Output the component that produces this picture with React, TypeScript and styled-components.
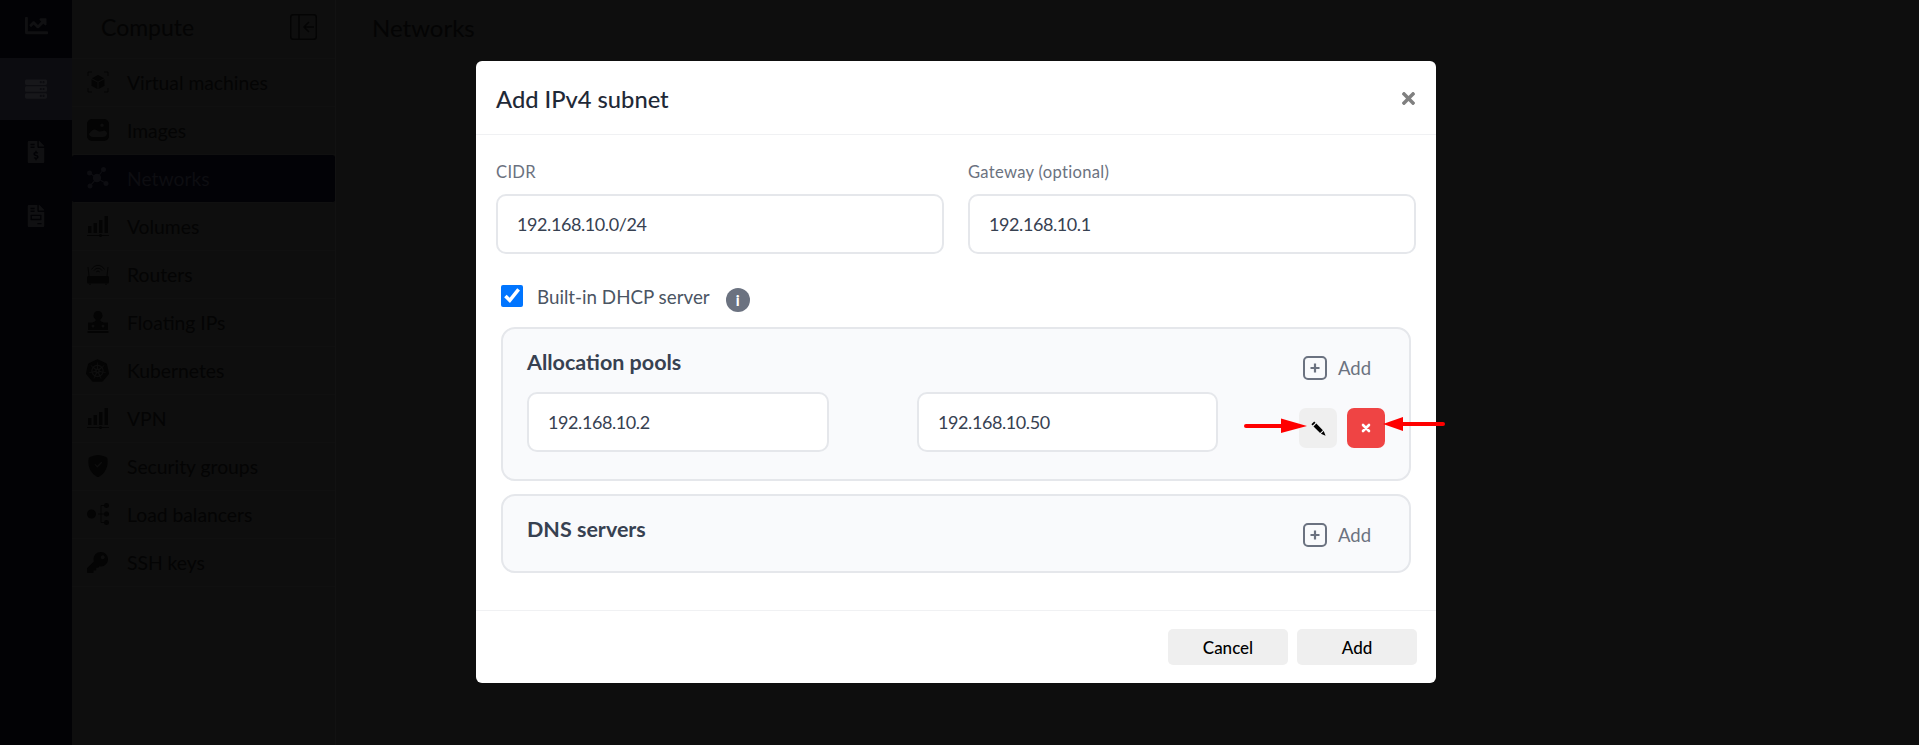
import React from 'react';
import styled, { createGlobalStyle } from 'styled-components';
import { FaChartLine, FaServer, FaFileInvoiceDollar, FaFileInvoice, FaKey, FaTimes } from 'react-icons/fa';
import { SiKubernetes } from 'react-icons/si';
import { BsShieldFillCheck } from 'react-icons/bs';

const FONT = `'Lato', 'Noto Sans', sans-serif`;

const GlobalStyle = createGlobalStyle`
    html, body {
        margin: 0;
        height: 100%;
        background: #0e0e0e;
        overflow: hidden;
    }
    * {
        box-sizing: border-box;
    }
`;

/**
 * page behind the dialog
 */
const Page = styled.div`
    display: flex;
    height: 745px;
    font-family: ${FONT};
    color: #040404;
`;

const Rail = styled.nav`
    width: 72px;
    flex: none;
    background: #020205;
    color: #101012;
`;

const RailItem = styled.div<{ $height: number; $active?: boolean; $pad?: number }>`
    height: ${(props) => props.$height}px;
    padding-bottom: ${(props) => props.$pad || 0}px;
    display: flex;
    align-items: center;
    justify-content: center;
    background: ${(props) => (props.$active ? '#0c0c10' : 'transparent')};
    color: ${(props) => (props.$active ? '#17171a' : 'inherit')};
`;

const Side = styled.aside`
    width: 264px;
    flex: none;
    border-right: 1px solid #121212;
`;

const SideHead = styled.div`
    height: 59px;
    padding: 0 18px 4px 29px;
    display: flex;
    align-items: center;
    justify-content: space-between;
    font-size: 23px;
    border-bottom: 1px solid #101010;
`;

const SideRow = styled.div<{ $active?: boolean }>`
    height: 48px;
    padding: 0 0 1px 14px;
    display: flex;
    align-items: center;
    gap: 18px;
    font-size: 19.3px;
    border-bottom: 1px solid #101010;
    border-radius: ${(props) => (props.$active ? '3px' : '0')};
    background: ${(props) => (props.$active ? '#020206' : 'transparent')};
    color: ${(props) => (props.$active ? '#0d0d11' : 'inherit')};
`;

const SideIcon = styled.span`
    width: 23px;
    height: 22px;
    flex: none;
    display: flex;
    align-items: center;
    justify-content: center;
`;

const Main = styled.main`
    flex: 1;
    height: 58px;
    padding: 0 0 4px 36px;
    display: flex;
    align-items: center;
    font-size: 24px;
`;

/**
 * dialog
 */
const Dialog = styled.section`
    position: absolute;
    left: 476px;
    top: 61px;
    width: 960px;
    height: 622px;
    background: #fff;
    border-radius: 6px;
    font-family: ${FONT};
    display: flex;
    flex-direction: column;
`;

const DialogHead = styled.header`
    height: 74px;
    flex: none;
    padding: 2px 18px 0 20px;
    display: flex;
    align-items: center;
    justify-content: space-between;
    border-bottom: 1px solid #f0f1f3;
`;

const Title = styled.h2`
    margin: 0;
    font-size: 23.7px;
    font-weight: 500;
    color: #1f2937;
`;

const Close = styled.button`
    border: 0;
    padding: 0;
    background: none;
    display: flex;
    color: #808080;
    font-size: 19px;
`;

const DialogBody = styled.div`
    flex: 1;
    padding: 26px 20px 0;
`;

const Fields = styled.div`
    display: grid;
    grid-template-columns: 1fr 1fr;
    gap: 24px;
`;

const Label = styled.label`
    display: block;
    height: 22px;
    margin-bottom: 11px;
    font-size: 16.6px;
    letter-spacing: 0.3px;
    line-height: 22px;
    color: #6b7280;
`;

const Input = styled.input`
    display: block;
    width: 100%;
    height: 60px;
    padding: 0 19px;
    border: 2px solid #e5e7eb;
    border-radius: 10px;
    background: #fff;
    font-family: ${FONT};
    font-size: 18px;
    letter-spacing: -0.42px;
    color: #374151;
    outline: none;
`;

const DhcpRow = styled.div`
    height: 42px;
    margin: 31px 5px 0;
    display: flex;
    align-items: flex-start;
    font-size: 18.8px;
    color: #4b5563;
`;

const Check = styled.input`
    width: 22px;
    height: 22px;
    margin: 0 14px 0 0;
`;

const DhcpText = styled.span`
    line-height: 24px;
    margin-right: 16px;
`;

const Info = styled.span`
    width: 24px;
    height: 24px;
    margin-top: 3px;
    border-radius: 50%;
    background: #6b7280;
    color: #fff;
    font-size: 15px;
    font-weight: 900;
    display: flex;
    align-items: center;
    justify-content: center;
`;

const Panel = styled.div<{ $height: number }>`
    height: ${(props) => props.$height}px;
    margin: 0 5px 13px;
    padding: 0 24px;
    background: #f9fafc;
    border: 2px solid #e5e7eb;
    border-radius: 14px;
`;

const PanelHead = styled.div`
    height: 63px;
    display: flex;
    justify-content: space-between;
    align-items: flex-start;
    padding-top: 20px;
`;

const PanelTitle = styled.h3`
    margin: 0;
    font-size: 21.5px;
    font-weight: 700;
    line-height: 26px;
    color: #374151;
`;

const AddLink = styled.button`
    margin: 7px 14px 0 0;
    padding: 0;
    border: 0;
    background: none;
    display: flex;
    align-items: center;
    gap: 11px;
    font-family: ${FONT};
    font-size: 18.5px;
    color: #6b7280;
`;

const PoolRow = styled.div`
    position: relative;
    display: grid;
    grid-template-columns: 302px 301px auto;
    column-gap: 88px;
    align-items: flex-start;
`;

const RowActions = styled.div`
    display: flex;
    gap: 10px;
    margin: 16px 0 0 -7px;
`;

const IconBtn = styled.button<{ $danger?: boolean }>`
    width: 38px;
    height: 40px;
    padding: 0;
    border: 0;
    border-radius: 7px;
    display: flex;
    align-items: center;
    justify-content: center;
    background: ${(props) => (props.$danger ? '#ef4444' : '#efefef')};
    color: ${(props) => (props.$danger ? '#fff' : '#000')};
`;

const Arrows = styled.svg`
    position: absolute;
    left: 717px;
    top: 24px;
`;

const DialogFoot = styled.footer`
    height: 73px;
    flex: none;
    padding: 18px 19px 0 0;
    display: flex;
    justify-content: flex-end;
    gap: 9px;
    border-top: 1px solid #f0f1f3;
`;

const FootBtn = styled.button`
    width: 120px;
    height: 36px;
    padding: 0;
    border: 0;
    border-radius: 5px;
    background: #efefef;
    color: #000;
    font-family: ${FONT};
    font-size: 17px;
    font-weight: 500;
`;

const CubeIcon = () => (
    <svg width="22" height="22" viewBox="0 0 22 22" fill="none" stroke="currentColor" strokeWidth="1">
        <path d="M1 5V1h4M17 1h4v4M21 17v4h-4M5 21H1v-4" />
        <path fill="currentColor" stroke="none" d="M11 4l6 3.2-6 3.2-6-3.2zM4.5 8.3l6 3.2V18l-6-3.2zM17.5 8.3v6.5l-6 3.2v-6.5z" />
    </svg>
);

const ImageIcon = () => (
    <svg width="22" height="22" viewBox="0 0 22 22" fill="currentColor">
        <path
            fillRule="evenodd"
            d="M5 0h12a5 5 0 0 1 5 5v12a5 5 0 0 1-5 5H5a5 5 0 0 1-5-5V5a5 5 0 0 1 5-5zM15 4.500a1.800 1.800 0 1 0 0 3.600 1.800 1.800 0 0 0 0-3.600zM2 15c2-3 3.500-4.500 5.500-4.500 2.500 0 3 2 5.500 2 2 0 3-1 4-1 1.500 0 2.500 1 3 2.500v1c-.5 2-2 3-4 3H6c-2.500 0-4-1.500-4-3z"
        />
    </svg>
);

const NodesIcon = () => (
    <svg width="22" height="22" viewBox="0 0 22 22" fill="currentColor" stroke="currentColor" strokeWidth="1.200">
        <path d="M10 11L2.500 6M10 11L3 19M10 11L16.500 2.500M10 11L19 16.500" />
        <circle cx="10" cy="11" r="4.200" stroke="none" />
        <circle cx="2.500" cy="6" r="2.500" stroke="none" />
        <circle cx="3" cy="19" r="2.500" stroke="none" />
        <circle cx="16.500" cy="2.500" r="2.500" stroke="none" />
        <circle cx="19" cy="16.500" r="2.500" stroke="none" />
    </svg>
);

const BarsIcon = () => (
    <svg width="22" height="22" viewBox="0 0 22 22" fill="currentColor">
        <rect x="1" y="11" width="3.5" height="7" />
        <rect x="6.5" y="8" width="3.5" height="10" />
        <rect x="12" y="5" width="3.5" height="13" />
        <rect x="17.5" y="1" width="3.5" height="17" />
        <rect x="0" y="20" width="22" height="1" />
        <circle cx="13.5" cy="20.5" r="1.5" />
    </svg>
);

const RouterIcon = () => (
    <svg width="22" height="22" viewBox="0 0 22 22" fill="none" stroke="currentColor">
        <path d="M4.500 6.500C7.500 1 14.500 1 17.500 6.500M7 7.500C9 4.500 13 4.500 15 7.500M9.200 9c1-1.200 2.600-1.200 3.600 0" strokeWidth="1" />
        <path d="M1 4l1 9M21 4l-1 9" strokeWidth="1" />
        <rect x="0" y="13" width="22" height="7.500" rx="1.500" fill="currentColor" stroke="none" />
        <path d="M3 20.500v1.500M19 20.500v1.500" strokeWidth="1.200" />
    </svg>
);

const FloatingIcon = () => (
    <svg width="22" height="22" viewBox="0 0 22 22" fill="currentColor">
        <path fillRule="evenodd" d="M11 0a4.5 4.5 0 0 1 2.5 8.2V10l3 1.500h4.500V19H1v-7.500h4.500l3-1.500V8.200A4.500 4.500 0 0 1 11 0zM6 13.500a1.500 1.500 0 1 0 0 3 1.500 1.500 0 0 0 0-3zm10 0a1.500 1.500 0 1 0 0 3 1.500 1.500 0 0 0 0-3z" />
        <rect x="0.500" y="20" width="21" height="2" />
    </svg>
);

const BalancerIcon = () => (
    <svg width="22" height="22" viewBox="0 0 22 22" fill="currentColor" stroke="currentColor">
        <circle cx="4.500" cy="11" r="4.500" stroke="none" />
        <circle cx="19.500" cy="2.500" r="2.500" stroke="none" />
        <circle cx="19.500" cy="11" r="2.500" stroke="none" />
        <circle cx="19.500" cy="19.500" r="2.500" stroke="none" />
        <path fill="none" d="M17 2.500h-3v17h3M11 11h6" />
    </svg>
);

const PanelToggleIcon = () => (
    <svg width="27" height="26" viewBox="0 0 27 26" fill="none" stroke="currentColor" strokeWidth="1.500">
        <rect x="0.750" y="0.750" width="25.500" height="24.500" rx="2.500" />
        <path d="M9 1v24M24 13H15M19 8l-5 5 5 5" />
    </svg>
);

const PlusBoxIcon = () => (
    <svg width="24" height="24" viewBox="0 0 24 24" fill="none" stroke="#6b7280">
        <rect x="1" y="1" width="22" height="22" rx="4" strokeWidth="2" />
        <path d="M12 7.500v9M7.500 12h9" strokeWidth="2.200" />
    </svg>
);

const PencilIcon = () => (
    <svg width="15" height="15" viewBox="0 0 15 15" fill="currentColor">
        <path d="M3.200 0.400l-2.800 2.800 1.300 1.300 2.800-2.800zM5.300 2.600l-2.800 2.800 6.600 6.600 2.800-2.800zM12.700 10l-2.800 2.800 4.700 1.900z" />
    </svg>
);

const CrossIcon = () => (
    <svg width="10" height="10" viewBox="0 0 10 10" stroke="currentColor" strokeWidth="2.600" strokeLinecap="round">
        <path d="M2 2l6 6M8 2l-6 6" />
    </svg>
);

const navItems: { name: string; icon: React.ReactNode; active?: boolean }[] = [
    { name: 'Virtual machines', icon: <CubeIcon /> },
    { name: 'Images', icon: <ImageIcon /> },
    { name: 'Networks', icon: <NodesIcon />, active: true },
    { name: 'Volumes', icon: <BarsIcon /> },
    { name: 'Routers', icon: <RouterIcon /> },
    { name: 'Floating IPs', icon: <FloatingIcon /> },
    { name: 'Kubernetes', icon: <SiKubernetes size={23} /> },
    { name: 'VPN', icon: <BarsIcon /> },
    { name: 'Security groups', icon: <BsShieldFillCheck size={22} /> },
    { name: 'Load balancers', icon: <BalancerIcon /> },
    { name: 'SSH keys', icon: <FaKey size={21} /> },
];

const App = () => (
    <>
        <GlobalStyle />
        <Page>
            <Rail>
                <RailItem $height={58} $pad={8}>
                    <FaChartLine size={23} />
                </RailItem>
                <RailItem $height={62} $active>
                    <FaServer size={22} />
                </RailItem>
                <RailItem $height={64}>
                    <FaFileInvoiceDollar size={22} />
                </RailItem>
                <RailItem $height={64}>
                    <FaFileInvoice size={22} />
                </RailItem>
            </Rail>
            <Side>
                <SideHead>
                    Compute
                    <PanelToggleIcon />
                </SideHead>
                {navItems.map((item) => (
                    <SideRow key={item.name} $active={item.active}>
                        <SideIcon>{item.icon}</SideIcon>
                        {item.name}
                    </SideRow>
                ))}
            </Side>
            <Main>Networks</Main>
        </Page>

        <Dialog>
            <DialogHead>
                <Title>Add IPv4 subnet</Title>
                <Close aria-label="Close">
                    <FaTimes />
                </Close>
            </DialogHead>
            <DialogBody>
                <Fields>
                    <div>
                        <Label>CIDR</Label>
                        <Input readOnly value="192.168.10.0/24" />
                    </div>
                    <div>
                        <Label>Gateway (optional)</Label>
                        <Input readOnly value="192.168.10.1" />
                    </div>
                </Fields>
                <DhcpRow>
                    <Check type="checkbox" readOnly checked />
                    <DhcpText>Built-in DHCP server</DhcpText>
                    <Info>i</Info>
                </DhcpRow>
                <Panel $height={154}>
                    <PanelHead>
                        <PanelTitle>Allocation pools</PanelTitle>
                        <AddLink>
                            <PlusBoxIcon />
                            Add
                        </AddLink>
                    </PanelHead>
                    <PoolRow>
                        <Input readOnly value="192.168.10.2" />
                        <Input readOnly value="192.168.10.50" />
                        <RowActions>
                            <IconBtn>
                                <PencilIcon />
                            </IconBtn>
                            <IconBtn $danger>
                                <CrossIcon />
                            </IconBtn>
                        </RowActions>
                        <Arrows width="202" height="22" viewBox="0 0 202 22" fill="#f00" stroke="#f00">
                            <path d="M2 10h38" strokeWidth="4" strokeLinecap="round" />
                            <path d="M37 2.500L63 10 37 17z" stroke="none" />
                            <path d="M139 8L159 1v14z" stroke="none" />
                            <path d="M157 8h42" strokeWidth="4" strokeLinecap="round" />
                        </Arrows>
                    </PoolRow>
                </Panel>
                <Panel $height={79}>
                    <PanelHead>
                        <PanelTitle>DNS servers</PanelTitle>
                        <AddLink>
                            <PlusBoxIcon />
                            Add
                        </AddLink>
                    </PanelHead>
                </Panel>
            </DialogBody>
            <DialogFoot>
                <FootBtn>Cancel</FootBtn>
                <FootBtn>Add</FootBtn>
            </DialogFoot>
        </Dialog>
    </>
);

export default App;
